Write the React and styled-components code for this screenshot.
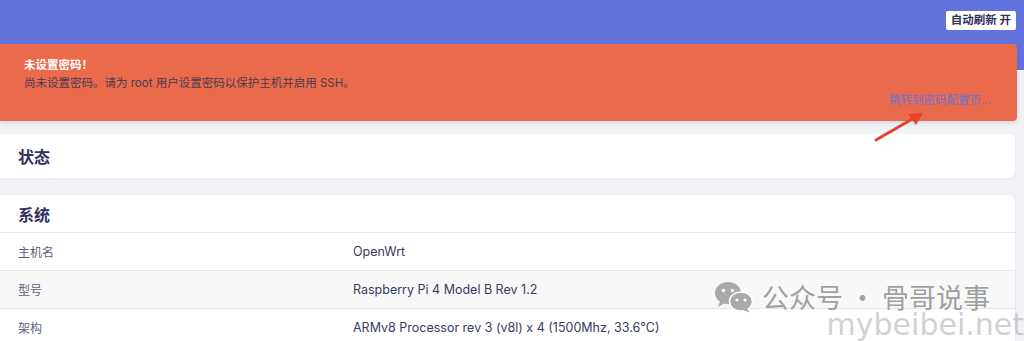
import React from "react";
import styled, { createGlobalStyle } from "styled-components";

const GlobalStyle = createGlobalStyle`
  html, body { margin: 0; padding: 0; }
  body {
    background: #f1f2f5;
    font-family: Inter, "Noto Sans CJK SC", sans-serif;
    overflow: hidden;
  }
`;

const Page = styled.div`
  position: relative;
  width: 1024px;
  height: 341px;
  overflow: hidden;
`;

const Header = styled.header`
  height: 70px;
  background: #6373de;
  display: flex;
  justify-content: flex-end;
  align-items: flex-start;
  padding: 11px 8px 0 0;
  box-sizing: border-box;
`;

const RefreshButton = styled.button`
  height: 19px;
  padding: 0 5px;
  background: #fff;
  border: none;
  border-radius: 2px;
  font-family: Inter, "Noto Sans CJK SC", sans-serif;
  font-size: 11.5px;
  font-weight: 700;
  color: #32325d;
  line-height: 19px;
`;

const Main = styled.main`
  margin-top: -26px;
  padding-right: 7px;
  display: flex;
  flex-direction: column;
`;

const Alert = styled.div`
  background: #e96b4c;
  border-radius: 0 4px 4px 0;
  box-shadow: 0 2px 4px rgba(50, 50, 93, 0.15);
  height: 77px;
  box-sizing: border-box;
  padding: 14px 26px 0 24px;
  display: flex;
  flex-direction: column;
`;

const AlertTitle = styled.div`
  font-size: 11.5px;
  font-weight: 700;
  color: #fff;
  line-height: 15px;
`;

const AlertText = styled.div`
  font-size: 11.5px;
  color: #4a3a52;
  line-height: 15px;
  margin-top: 3px;
`;

const AlertLink = styled.a`
  align-self: flex-end;
  margin-top: 2px;
  font-size: 11.5px;
  color: #6a72d6;
  line-height: 15px;
  text-decoration: none;
`;

const Card = styled.section`
  background: #fff;
  border-radius: 0 6px 6px 0;
  box-shadow: 0 1px 3px rgba(50, 50, 93, 0.08);
  margin-top: ${(p) => p.$gap}px;
  margin-right: 2px;
  overflow: hidden;
`;

const CardTitle = styled.h3`
  margin: 0;
  height: ${(p) => p.$h}px;
  display: flex;
  align-items: center;
  padding-left: 18px;
  font-size: 16px;
  font-weight: 700;
  color: #32325d;
  border-bottom: ${(p) => (p.$divided ? "1px solid #e6e7ea" : "none")};
`;

const Row = styled.div`
  display: grid;
  grid-template-columns: 335px 1fr;
  height: 37px;
  align-items: center;
  padding-left: 18px;
  background: ${(p) => (p.$alt ? "#f8f8f9" : "#fff")};
  border-bottom: 1px solid #e6e7ea;
  font-size: 12px;
`;

const Label = styled.span`
  color: #5b6279;
`;

const Value = styled.span`
  color: #3a3b5e;
  font-size: 12.5px;
`;

const Arrow = styled.svg`
  position: absolute;
  left: 870px;
  top: 108px;
`;

const Watermark = styled.div`
  position: absolute;
  right: 0;
  top: 279px;
  display: flex;
  flex-direction: column;
  align-items: flex-end;
  pointer-events: none;
  white-space: nowrap;
`;

const WmLine = styled.div`
  display: flex;
  align-items: center;
  gap: 8px;
  margin-right: 34px;
  font-family: "Noto Sans CJK SC", sans-serif;
  font-size: 27px;
  color: rgba(120, 120, 120, 0.7);
  line-height: 36px;
`;

const WmSite = styled.div`
  font-family: "DejaVu Sans", sans-serif;
  font-size: 30px;
  color: rgba(170, 170, 170, 0.55);
  line-height: 32px;
  margin-top: -6px;
  margin-right: 0;
`;

const WeChat = () => (
  <svg width="40" height="32" viewBox="0 0 40 32">
    <ellipse cx="14" cy="12" rx="13" ry="11" fill="#a9a9a9" />
    <path d="M6 20 L4 26 L11 22 Z" fill="#a9a9a9" />
    <circle cx="9.5" cy="9.5" r="1.8" fill="#fff" />
    <circle cx="18.5" cy="9.5" r="1.8" fill="#fff" />
    <ellipse cx="27" cy="20.5" rx="11.5" ry="9.5" stroke="#fff" strokeWidth="1.5" fill="#a9a9a9" />
    <path d="M33 27 L35.5 31.5 L29 29 Z" fill="#a9a9a9" />
    <circle cx="23" cy="19" r="1.6" fill="#fff" />
    <circle cx="31" cy="19" r="1.6" fill="#fff" />
  </svg>
);

export default function App() {
  return (
    <>
      <GlobalStyle />
      <Page>
        <Header>
          <RefreshButton>自动刷新 开</RefreshButton>
        </Header>
        <Main>
          <Alert>
            <AlertTitle>未设置密码！</AlertTitle>
            <AlertText>尚未设置密码。请为 root 用户设置密码以保护主机并启用 SSH。</AlertText>
            <AlertLink>跳转到密码配置页...</AlertLink>
          </Alert>
          <Card $gap={13}>
            <CardTitle $h={44}>状态</CardTitle>
          </Card>
          <Card $gap={17}>
            <CardTitle $h={37} $divided>系统</CardTitle>
            <Row>
              <Label>主机名</Label>
              <Value>OpenWrt</Value>
            </Row>
            <Row $alt>
              <Label>型号</Label>
              <Value>Raspberry Pi 4 Model B Rev 1.2</Value>
            </Row>
            <Row>
              <Label>架构</Label>
              <Value>ARMv8 Processor rev 3 (v8l) x 4 (1500Mhz, 33.6°C)</Value>
            </Row>
          </Card>
        </Main>
        <Arrow width="60" height="40" viewBox="0 0 60 40">
          <line x1="6" y1="32" x2="44" y2="10" stroke="#e5432a" strokeWidth="3" strokeLinecap="round" />
          <path d="M53 5 L38 6 L46 17 Z" fill="#e5432a" />
        </Arrow>
        <Watermark>
          <WmLine>
            <WeChat />
            <span>公众号 · 骨哥说事</span>
          </WmLine>
          <WmSite>mybeibei.net</WmSite>
        </Watermark>
      </Page>
    </>
  );
}
